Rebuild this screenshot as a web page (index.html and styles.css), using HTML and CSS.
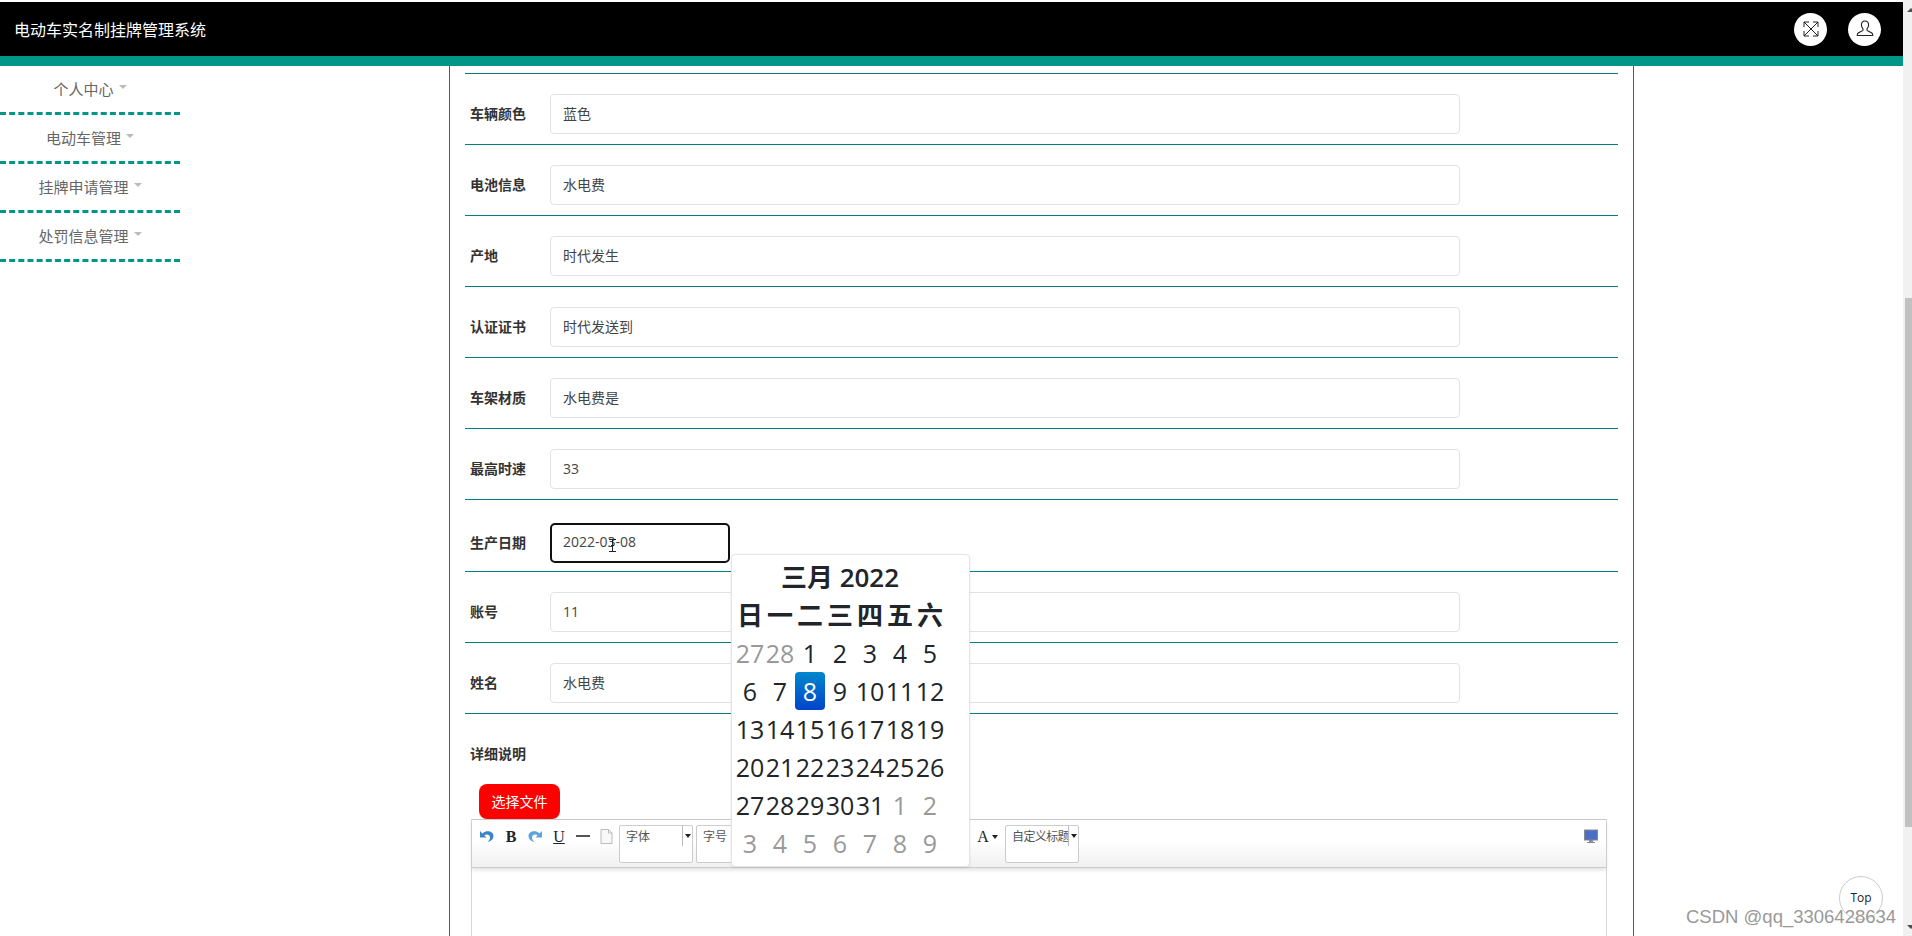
FILE: index.html
```html
<!DOCTYPE html>
<html>
<head>
    <meta charset="UTF-8">
    <title>电动车实名制挂牌管理系统</title>
    <link rel="stylesheet" href="styles.css">
</head>
<body>
    <div class="page">
        <div class="header">
            <div class="logo">电动车实名制挂牌管理系统</div>
            <div class="header-icons">
                <div class="round-btn">
                    <svg width="18" height="18" viewBox="0 0 18 18" fill="none" stroke="#222" stroke-width="1">
                        <path d="M2 2l14 14M16 2L2 16M2 2h5M2 2v5M16 2h-5M16 2v5M2 16h5M2 16v-5M16 16h-5M16 16v-5"/>
                    </svg>
                </div>
                <div class="round-btn">
                    <svg width="20" height="20" viewBox="0 0 20 20" fill="none" stroke="#222" stroke-width="1.1">
                        <path d="M10 2c-2.400 0-3.600 1.800-3.600 4 0 1.600.8 3 1.600 3.800v1.400c-.6 1.200-4.400 2-5.400 3.400-.3.6-.3 1.200-.3 1.900h15.400c0-.7 0-1.300-.3-1.900-1-1.400-4.800-2.200-5.400-3.400V9.800c.8-.8 1.600-2.200 1.600-3.800 0-2.200-1.200-4-3.600-4z"/>
                    </svg>
                </div>
            </div>
        </div>
        <div class="teal-bar"></div>

        <div class="main">
            <div class="sidebar">
                <div class="nav-item">个人中心<span class="caret"></span></div>
                <div class="nav-item">电动车管理<span class="caret"></span></div>
                <div class="nav-item">挂牌申请管理<span class="caret"></span></div>
                <div class="nav-item">处罚信息管理<span class="caret"></span></div>
            </div>

            <div class="panel">
                <div class="form-row"><label>车辆颜色</label><div class="input">蓝色</div></div>
                <div class="form-row"><label>电池信息</label><div class="input">水电费</div></div>
                <div class="form-row"><label>产地</label><div class="input">时代发生</div></div>
                <div class="form-row"><label>认证证书</label><div class="input">时代发送到</div></div>
                <div class="form-row"><label>车架材质</label><div class="input">水电费是</div></div>
                <div class="form-row"><label>最高时速</label><div class="input">33</div></div>
                <div class="form-row date-row"><label>生产日期</label><div class="input date-input">2022-03-08</div></div>
                <div class="form-row"><label>账号</label><div class="input">11</div></div>
                <div class="form-row"><label>姓名</label><div class="input">水电费</div></div>

                <div class="detail">
                    <label>详细说明</label>
                    <div class="upload-btn">选择文件</div>
                    <div class="editor">
                        <div class="toolbar">
                            <svg class="tool" width="15" height="15" viewBox="0 0 15 15"><path d="M1 2v6.500h6.500L5.300 6.300C7.800 4.500 11 5.800 11 8.500c0 1.500-.9 3-2.300 4.500 3.500-.8 5.800-3.200 5.800-6C14.500 2.500 8 .5 3.400 4.400z" fill="#3d85c6"/></svg>
                            <span class="tool tool-text tool-b">B</span>
                            <svg class="tool" width="15" height="15" viewBox="0 0 15 15"><path d="M14 2v6.500H7.500l2.200-2.200C7.200 4.500 4 5.800 4 8.500c0 1.500.9 3 2.300 4.500C2.800 12.200.5 9.800.5 7 .5 2.500 7 .5 11.600 4.400z" fill="#5ba3dc"/></svg>
                            <span class="tool tool-text tool-u">U</span>
                            <span class="tool tool-hr"></span>
                            <svg class="tool tool-doc" width="13" height="15" viewBox="0 0 13 15"><path d="M1 .5h7.500l3.500 3.500v10.500H1zM8.500 .5V4H12" fill="#f8f8f8" stroke="#bbb"/></svg>
                            <div class="combo combo-font"><span class="combo-text">字体</span><i></i><em></em></div>
                            <div class="combo combo-size"><span class="combo-text">字号</span></div>
                            <div class="toolbar-rest">
                                <span class="tool tool-text tool-a">A</span>
                                <span class="a-arrow"></span>
                                <div class="combo combo-title"><span class="combo-text">自定义标题</span><i></i><em></em></div>
                            </div>
                            <svg class="tool tool-screen" width="14" height="15" viewBox="0 0 14 15"><rect x=".5" y="1" width="13" height="10" fill="#4a6fc4" stroke="#889"/><path d="M5 11h4v2H5zM3 13h8v1H3z" fill="#889"/></svg>
                        </div>
                        <div class="editor-body"></div>
                    </div>
                </div>
            </div>
        </div>

        <div class="calendar">
            <div class="cal-title">三月 2022</div>
            <div class="cal-grid">
                <b>日</b><b>一</b><b>二</b><b>三</b><b>四</b><b>五</b><b>六</b>
                <span class="old">27</span><span class="old">28</span><span>1</span><span>2</span><span>3</span><span>4</span><span>5</span>
                <span>6</span><span>7</span><span class="active">8</span><span>9</span><span>10</span><span>11</span><span>12</span>
                <span>13</span><span>14</span><span>15</span><span>16</span><span>17</span><span>18</span><span>19</span>
                <span>20</span><span>21</span><span>22</span><span>23</span><span>24</span><span>25</span><span>26</span>
                <span>27</span><span>28</span><span>29</span><span>30</span><span>31</span><span class="old">1</span><span class="old">2</span>
                <span class="old">3</span><span class="old">4</span><span class="old">5</span><span class="old">6</span><span class="old">7</span><span class="old">8</span><span class="old">9</span>
            </div>
        </div>

        <svg class="ibeam" width="7" height="13" viewBox="0 0 7 13" fill="none" stroke="#222" stroke-width="1"><path d="M0 .5h7M0 12.500h7M3.500 .5v12M2 6.500h3"/></svg>
        <div class="to-top">Top</div>
        <div class="watermark">CSDN @qq_3306428634</div>

        <div class="scrollbar">
            <span class="arrow-up"></span>
            <div class="thumb"></div>
            <span class="arrow-down"></span>
        </div>
    </div>
</body>
</html>
```

FILE: styles.css
```css
* {
    box-sizing: border-box;
}
html, body {
    margin: 0;
    height: 100%;
    overflow: hidden;
}
body {
    font-family: "Open Sans", "Noto Sans CJK SC", sans-serif;
    font-size: 14px;
    color: #333;
    background-color: #fff;
}
.page {
    position: relative;
    width: 1912px;
    height: 936px;
    padding-top: 2px;
    overflow: hidden;
    display: flex;
    flex-direction: column;
}
.header {
    height: 54px;
    width: 1903px;
    flex-shrink: 0;
    background-color: #000;
    display: flex;
    align-items: center;
    justify-content: space-between;
    padding: 0 22px 0 14px;
}
.logo {
    color: #fff;
    font-size: 16px;
}
.header-icons {
    display: flex;
    gap: 21px;
}
.round-btn {
    width: 33px;
    height: 33px;
    border-radius: 50%;
    background-color: #fff;
    display: flex;
    align-items: center;
    justify-content: center;
}
.teal-bar {
    height: 10px;
    width: 1903px;
    flex-shrink: 0;
    background-color: #009688;
}
.main {
    display: flex;
    flex: 1;
    min-height: 0;
}
.sidebar {
    width: 180px;
    margin-right: 269px;
    flex-shrink: 0;
}
.nav-item {
    height: 49px;
    padding-bottom: 2px;
    display: flex;
    align-items: center;
    justify-content: center;
    color: #666;
    font-size: 15px;
    border-bottom: 3px dashed #009688;
}
.caret {
    width: 0;
    height: 0;
    margin-left: 5px;
    margin-top: -3px;
    border-left: 4px solid transparent;
    border-right: 4px solid transparent;
    border-top: 4px solid #bbb;
}
.panel {
    width: 1185px;
    padding: 7px 15px 0;
    border-left: 1px solid #008080;
    border-right: 1px solid #008080;
    overflow: hidden;
}
.form-row {
    height: 71px;
    padding: 10px 0 0 5px;
    border-top: 1px solid #008080;
    display: flex;
    align-items: center;
}
.date-row {
    height: 72px;
    padding-top: 15px;
}
label {
    width: 80px;
    flex-shrink: 0;
    margin-top: -2px;
    font-size: 14px;
    font-weight: bold;
    color: #333;
}
.input {
    width: 910px;
    height: 40px;
    line-height: 38px;
    padding: 0 12px;
    border: 1px solid #e2e2e2;
    border-radius: 4px;
    color: #444;
}
.date-input {
    width: 180px;
    border: 2px solid #111;
    border-radius: 5px;
    line-height: 34px;
    padding: 0 11px;
}
.detail {
    border-top: 1px solid #008080;
    padding: 31px 0 0;
}
.detail label {
    display: block;
    margin-top: 0;
    padding-left: 5px;
    height: 18px;
    line-height: 18px;
}
.upload-btn {
    width: 81px;
    height: 35px;
    line-height: 35px;
    margin: 21px 0 0 14px;
    text-align: center;
    background-color: #f00;
    color: #fff;
    border-radius: 8px;
}
.editor {
    margin-left: 6px;
    width: 1136px;
    border: 1px solid #d8d8d8;
    border-top-color: #ccc;
    height: 300px;
}
.toolbar {
    height: 48px;
    padding: 8px 8px 0 7px;
    display: flex;
    align-items: flex-start;
    background: linear-gradient(#fff, #fff 45%, #f0f0f0);
    border-bottom: 1px solid #ccc;
    box-shadow: 0 2px 4px rgba(0, 0, 0, 0.12);
}
.tool {
    flex-shrink: 0;
    margin-top: 1px;
    margin-right: 11px;
}
.tool-text {
    font-family: "Liberation Serif", serif;
    color: #222;
    font-size: 16px;
    line-height: 15px;
    width: 12px;
    text-align: center;
}
.tool-b {
    font-weight: bold;
}
.tool-u {
    margin-left: -1px;
    text-decoration: underline;
}
.tool-hr {
    width: 14px;
    height: 2px;
    margin-top: 7px;
    background-color: #555;
}
.tool-doc {
    margin-left: -1px;
}
.combo {
    position: relative;
    flex-shrink: 0;
    width: 74px;
    height: 38px;
    padding: 2px 6px;
    border: 1px solid #ccc;
    border-radius: 2px;
    background-color: #fff;
    font-size: 12px;
    color: #555;
    margin-top: -3px;
    line-height: 17px;
}
.combo i {
    position: absolute;
    right: 9px;
    top: 0;
    height: 20px;
    width: 1px;
    background-color: #bbb;
}
.combo em {
    position: absolute;
    right: 1px;
    top: 8px;
    border-left: 3px solid transparent;
    border-right: 3px solid transparent;
    border-top: 4px solid #222;
}
.combo-text {
    display: block;
    width: 58px;
    white-space: nowrap;
}
.combo-font {
    margin-left: -5px;
}
.combo-size {
    margin-left: 3px;
}
.combo-title {
    margin-left: 7px;
    letter-spacing: -0.6px;
}
.toolbar-rest {
    display: flex;
    align-items: flex-start;
    margin-left: 207px;
}
.tool-a {
    margin-right: 3px;
}
.a-arrow {
    margin-top: 7px;
    border-left: 3px solid transparent;
    border-right: 3px solid transparent;
    border-top: 4px solid #222;
}
.tool-screen {
    margin-left: auto;
    margin-right: 0;
}
.editor-body {
    height: 250px;
}
.calendar {
    position: absolute;
    left: 731px;
    top: 554px;
    width: 239px;
    height: 313px;
    padding: 3px 3px 0;
    background-color: #fff;
    border: 1px solid #e4e4e4;
    border-radius: 4px;
    box-shadow: 0 1px 3px rgba(0, 0, 0, 0.08);
    color: #212529;
}
.cal-title {
    width: 210px;
    height: 38px;
    line-height: 38px;
    text-align: center;
    font-size: 26px;
    font-weight: 600;
    white-space: nowrap;
}
.cal-grid {
    display: grid;
    grid-template-columns: repeat(7, 30px);
    grid-auto-rows: 38px;
    text-align: center;
    font-size: 25px;
    line-height: 38px;
}
.cal-grid b {
    font-weight: 700;
    font-size: 26px;
}
.cal-grid span {
    white-space: nowrap;
}
.cal-grid .old {
    color: #999;
}
.cal-grid .active {
    color: #fff;
    border-radius: 4px;
    background: linear-gradient(#0088cc, #0044cc);
}
.ibeam {
    position: absolute;
    left: 609px;
    top: 539px;
}
.to-top {
    position: absolute;
    left: 1839px;
    top: 876px;
    width: 44px;
    height: 44px;
    border: 1px solid #ccc;
    border-radius: 50%;
    background-color: #fff;
    text-align: center;
    line-height: 42px;
    font-size: 12px;
    color: #222;
}
.watermark {
    position: absolute;
    left: 1686px;
    top: 906px;
    font-family: "Liberation Sans", sans-serif;
    font-size: 18.5px;
    color: #999;
    white-space: nowrap;
}
.scrollbar {
    position: absolute;
    right: 0;
    top: 0;
    bottom: 0;
    width: 9px;
    background-color: #f1f1f1;
    overflow: hidden;
}
.thumb {
    position: absolute;
    left: 2px;
    right: 0;
    top: 298px;
    height: 529px;
    background-color: #c1c1c1;
}
.arrow-up, .arrow-down {
    position: absolute;
    left: 4px;
    width: 0;
    height: 0;
    border-left: 4px solid transparent;
    border-right: 4px solid transparent;
}
.arrow-up {
    top: 8px;
    border-bottom: 4px solid #505050;
}
.arrow-down {
    bottom: 7px;
    border-top: 4px solid #505050;
}
```
